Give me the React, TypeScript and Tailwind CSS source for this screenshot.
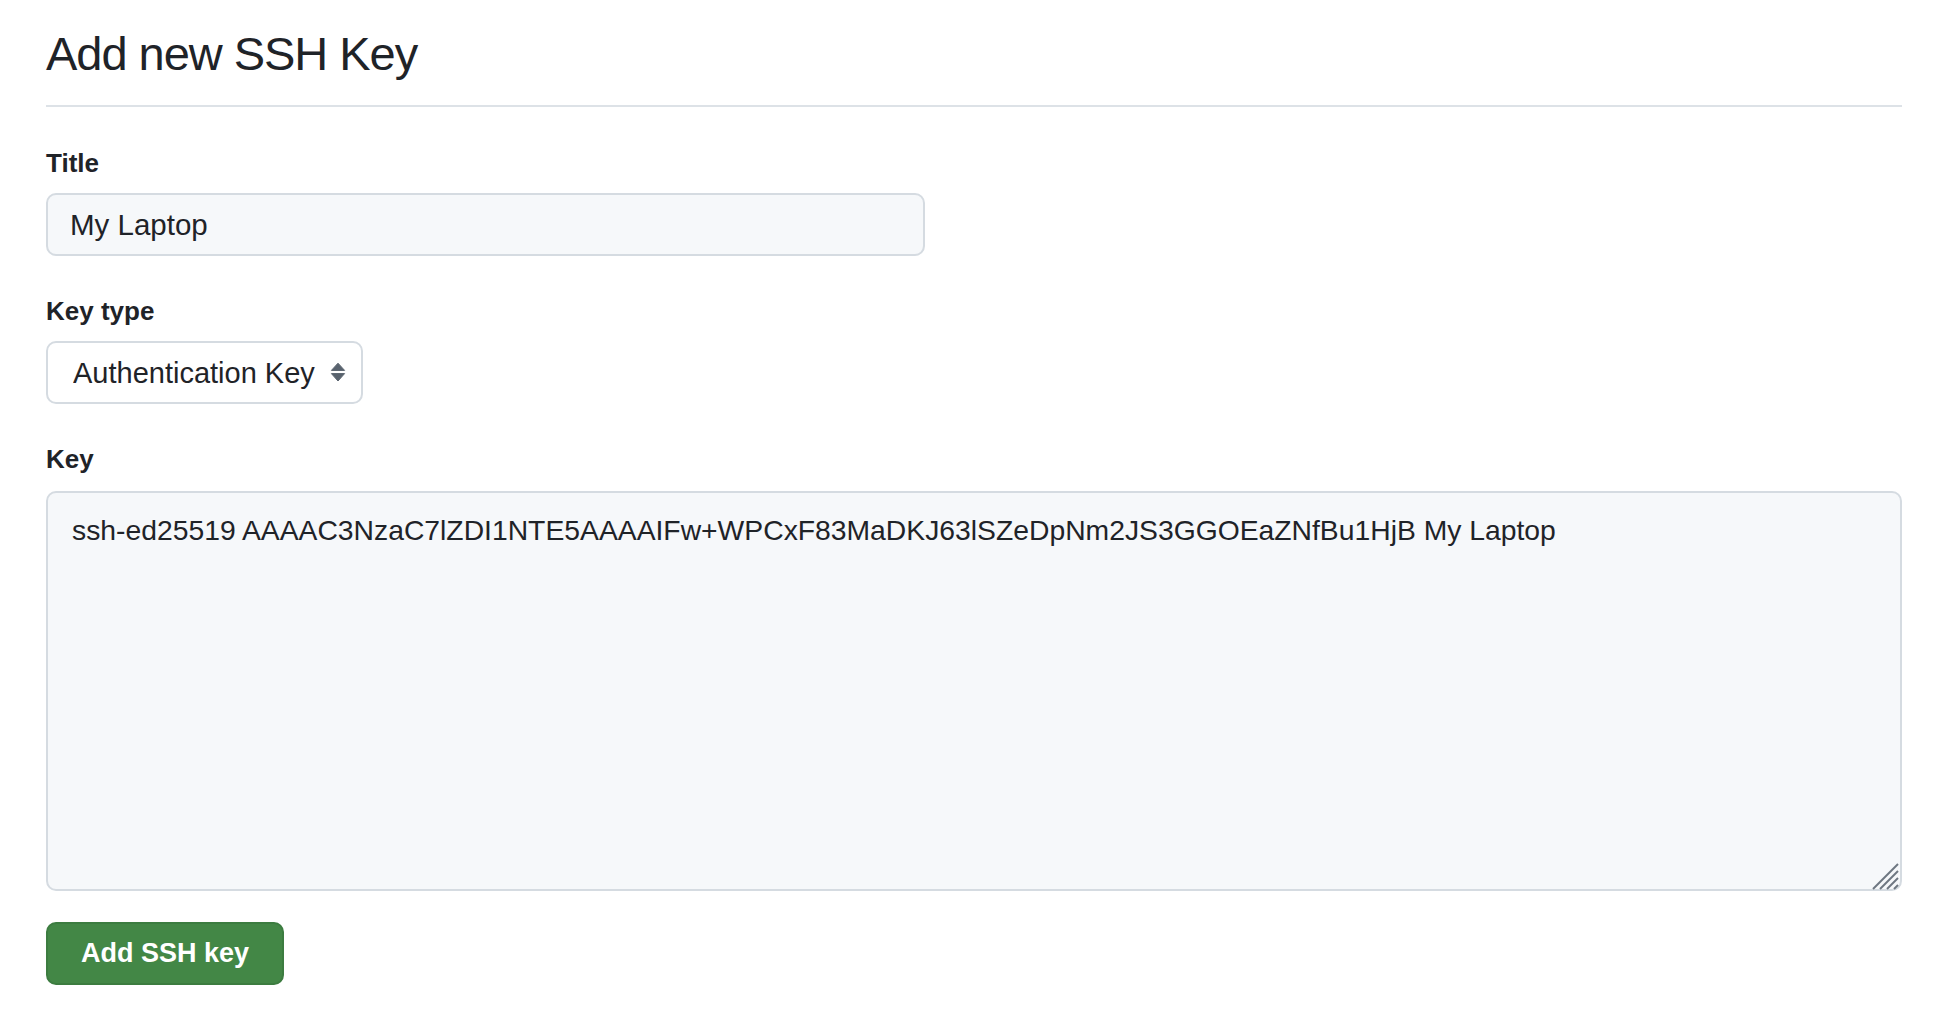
import { useState } from "react";

/**
 * New SSH key form: title, key type select, the key itself and a submit button.
 */
function SelectArrows() {
  return (
    <svg
      width="16"
      height="20"
      viewBox="0 0 16 20"
      fill="#59636e"
      aria-hidden="true"
      className="pointer-events-none absolute right-[17px] top-[21px]"
    >
      <path d="M8 1.2 14.6 8.4H1.4Z" strokeLinejoin="round" stroke="#59636e" strokeWidth="1" />
      <path d="M8 19 1.4 11.6H14.6Z" strokeLinejoin="round" stroke="#59636e" strokeWidth="1" />
    </svg>
  );
}

function ResizeGrip() {
  return (
    <svg
      width="28"
      height="28"
      viewBox="0 0 28 28"
      stroke="#6e7781"
      strokeWidth="2"
      strokeLinecap="butt"
      aria-hidden="true"
      className="pointer-events-none absolute bottom-[1px] right-[2px]"
    >
      <line x1="1" y1="27" x2="26" y2="2" />
      <line x1="8" y1="27" x2="26" y2="9" />
      <line x1="15" y1="27" x2="26" y2="16" />
      <line x1="22" y1="27" x2="26" y2="23" />
    </svg>
  );
}

export default function App() {
  const [title, setTitle] = useState("My Laptop");
  const [keyType, setKeyType] = useState("authentication");
  const [key, setKey] = useState(
    "ssh-ed25519 AAAAC3NzaC7lZDI1NTE5AAAAIFw+WPCxF83MaDKJ63lSZeDpNm2JS3GGOEaZNfBu1HjB My Laptop"
  );

  return (
    <div className="min-h-screen bg-white px-[46px] pt-[25px] font-['Liberation_Sans',Arial,sans-serif] text-[#1f2328]">
      {/* Header */}
      <div className="border-b-2 border-[#dde2e7] pb-[22px]">
        <h2 className="text-[47px] font-normal leading-[58px] tracking-[-0.022em]">
          Add new SSH Key
        </h2>
      </div>

      <form onSubmit={(e) => e.preventDefault()}>
        {/* Title */}
        <div className="mt-[40px]">
          <label
            htmlFor="ssh-title"
            className="mb-[14px] block text-[26px] font-bold leading-[32px]"
          >
            Title
          </label>
          <input
            id="ssh-title"
            value={title}
            onChange={(e) => setTitle(e.target.value)}
            className="block h-[63px] w-[879px] rounded-[10px] border-2 border-[#d5dbe1] bg-[#f6f8fa] pl-[22px] text-[29.5px] leading-[44px] text-[#1f2328] outline-none"
          />
        </div>

        {/* Key type */}
        <div className="mt-[39px]">
          <label
            htmlFor="ssh-type"
            className="mb-[14px] block text-[26px] font-bold leading-[32px]"
          >
            Key type
          </label>
          <div className="relative w-[317px]">
            <select
              id="ssh-type"
              value={keyType}
              onChange={(e) => setKeyType(e.target.value)}
              className="block h-[63px] w-full appearance-none rounded-[10px] border-2 border-[#d5dbe1] bg-white pl-[25px] text-[29px] leading-[44px] text-[#1f2328] outline-none"
            >
              <option value="authentication">Authentication Key</option>
              <option value="signing">Signing Key</option>
            </select>
            <SelectArrows />
          </div>
        </div>

        {/* Key */}
        <div className="mt-[39px]">
          <label
            htmlFor="ssh-key"
            className="mb-[16px] block text-[26px] font-bold leading-[32px]"
          >
            Key
          </label>
          <div className="relative">
            <textarea
              id="ssh-key"
              value={key}
              onChange={(e) => setKey(e.target.value)}
              className="block h-[400px] w-full resize-none rounded-[10px] border-2 border-[#d5dbe1] bg-[#f6f8fa] pl-[24px] pr-[24px] pt-[15px] text-[28.3px] leading-[44px] text-[#1f2328] outline-none"
            />
            <ResizeGrip />
          </div>
        </div>

        <button
          type="submit"
          className="mt-[31px] h-[63px] w-[238px] rounded-[10px] border-2 border-[#3c7c40] bg-[#438746] text-[27px] font-bold text-white"
        >
          Add SSH key
        </button>
      </form>
    </div>
  );
}
